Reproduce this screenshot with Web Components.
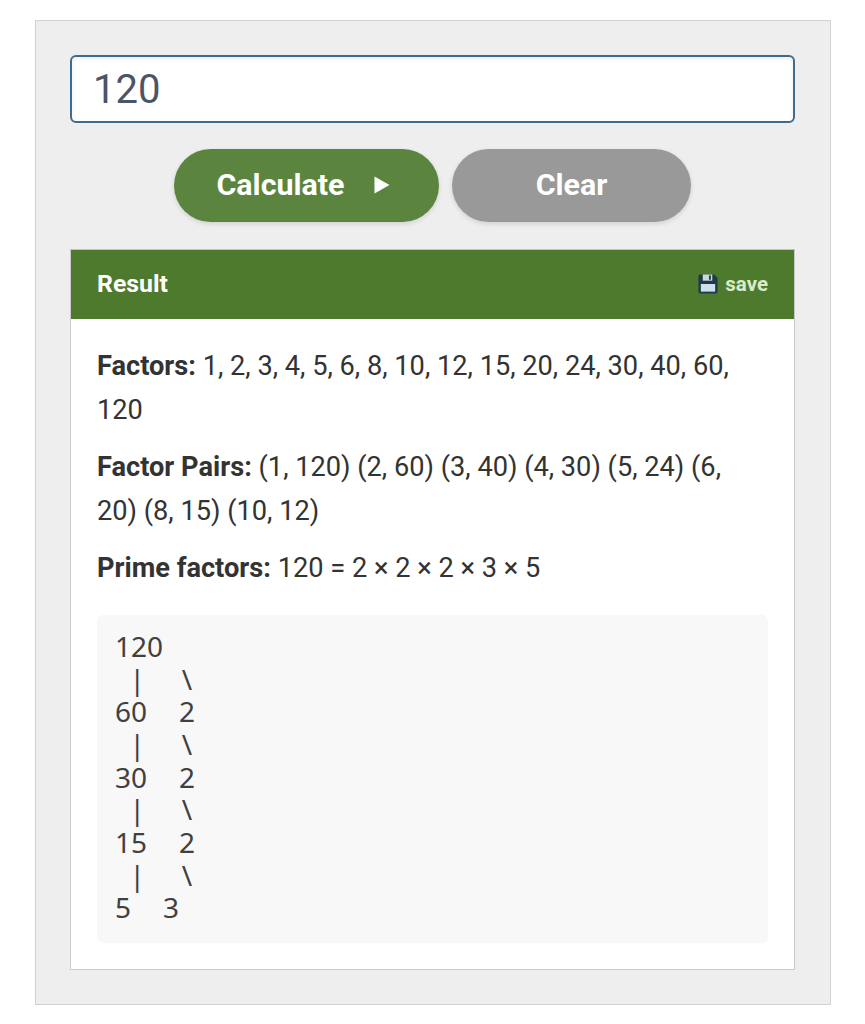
<!DOCTYPE html>
<html>
<head>
<meta charset="utf-8">
<title>Factor calculator</title>
<style>
  html, body { margin: 0; background: #fff; }
  body { padding: 20px 34px 19px 35px; font-family: Roboto, sans-serif; }
</style>
</head>
<body>
<factor-calc>
  <number-field value="120"></number-field>
  <button-row>
    <pill-button kind="go">Calculate</pill-button>
    <pill-button kind="clear">Clear</pill-button>
  </button-row>
  <result-panel>
    <p><b>Factors:</b> 1, 2, 3, 4, 5, 6, 8, 10, 12, 15, 20, 24, 30, 40, 60, 120</p>
    <p><b>Factor Pairs:</b> (1, 120) (2, 60) (3, 40) (4, 30) (5, 24) (6, 20) (8, 15) (10, 12)</p>
    <p><b>Prime factors:</b> 120 = 2 × 2 × 2 × 3 × 5</p>
    <factor-tree slot="tree">
      <div>120</div>
      <div class="link"> |  \</div>
      <div>60  2</div>
      <div class="link"> |  \</div>
      <div>30  2</div>
      <div class="link"> |  \</div>
      <div>15  2</div>
      <div class="link"> |  \</div>
      <div>5  3</div>
    </factor-tree>
  </result-panel>
</factor-calc>

<script>
class FactorCalc extends HTMLElement {
  constructor() {
    super();
    this.attachShadow({ mode: 'open' }).innerHTML = `
      <style>
        :host {
          display: block;
          box-sizing: border-box;
          height: 985px;
          padding: 34px 35px 34px 34px;
          background: #eee;
          border: 1px solid #d2d2d2;
        }
      </style>
      <slot></slot>`;
  }
}

class NumberField extends HTMLElement {
  constructor() {
    super();
    this.attachShadow({ mode: 'open' }).innerHTML = `
      <style>
        :host { display: block; }
        .box {
          box-sizing: border-box;
          height: 68px;
          padding: 0 21px;
          display: flex;
          align-items: center;
          background: #fff;
          border: 2px solid #3f6c8e;
          border-radius: 6px;
          box-shadow: inset 0 2px 4px rgba(0,0,0,0.07);
          color: #4a5568;
          font: 400 40px Roboto, sans-serif;
        }
      </style>
      <div class="box"></div>`;
  }
  connectedCallback() {
    this.shadowRoot.querySelector('.box').textContent = this.getAttribute('value');
  }
}

class ButtonRow extends HTMLElement {
  constructor() {
    super();
    this.attachShadow({ mode: 'open' }).innerHTML = `
      <style>
        :host {
          display: flex;
          justify-content: center;
          gap: 13px;
          margin: 26px 0 27px;
        }
      </style>
      <slot></slot>`;
  }
}

class PillButton extends HTMLElement {
  constructor() {
    super();
    this.attachShadow({ mode: 'open' }).innerHTML = `
      <style>
        :host {
          display: flex;
          box-sizing: border-box;
          height: 73px;
          padding-bottom: 2px;
          align-items: center;
          justify-content: center;
          gap: 29px;
          border-radius: 37px;
          color: #fff;
          font: 700 30.4px Roboto, sans-serif;
          box-shadow: 0 2px 5px rgba(0,0,0,0.12);
        }
        :host([kind="go"]) { width: 265px; padding-right: 7px; background: #5b853e; }
        :host([kind="clear"]) { width: 239px; background: #999; }
        svg { display: none; }
        :host([kind="go"]) svg { display: block; }
      </style>
      <span><slot></slot></span>
      <svg width="16" height="18" viewBox="0 0 16 18"><path d="M0.5 0.5 L15.5 9 L0.5 17.5 Z" fill="#fff"/></svg>`;
  }
}

class ResultPanel extends HTMLElement {
  constructor() {
    super();
    this.attachShadow({ mode: 'open' }).innerHTML = `
      <style>
        :host {
          display: block;
          box-sizing: border-box;
          height: 721px;
          background: #fff;
          border: 1px solid #c9c9c9;
          border-top-color: #b9c9ad;
          color: #333;
        }
        header {
          height: 69px;
          padding: 0 26px 2px;
          box-sizing: border-box;
          display: flex;
          align-items: center;
          justify-content: space-between;
          background: #4e7a2d;
          color: #fff;
          font: 700 24.8px Roboto, sans-serif;
        }
        .save {
          display: flex;
          align-items: center;
          gap: 7px;
          color: #d8eccb;
          font-size: 20.5px;
        }
        main { padding: 25px 30px 0 26px; font: 400 27.2px/44px Roboto, sans-serif; }
        ::slotted(p) { margin: 0 0 13px; }
        .tree { display: block; margin-top: 25px; }
        ::slotted(factor-tree) { margin: 0 26px; }
      </style>
      <header>
        <span>Result</span>
        <span class="save">
          <svg width="20" height="20" viewBox="0 0 21 21">
            <path d="M2 0.5 H17 L20.5 4 V19 a1.5 1.5 0 0 1 -1.5 1.5 H2 a1.5 1.5 0 0 1 -1.5 -1.5 V2 a1.5 1.5 0 0 1 1.5 -1.5 Z" fill="#1f3a4a"/>
            <rect x="5" y="0.5" width="10" height="6.5" fill="#cfd8dc"/>
            <rect x="11.5" y="1.5" width="2" height="4.5" fill="#1f3a4a"/>
            <rect x="3" y="10.5" width="15" height="8" fill="#cfe0ec"/>
          </svg>
          save
        </span>
      </header>
      <main><slot></slot></main>
      <div class="tree"><slot name="tree"></slot></div>`;
  }
}

class FactorTree extends HTMLElement {
  constructor() {
    super();
    this.attachShadow({ mode: 'open' }).innerHTML = `
      <style>
        :host {
          display: block;
          box-sizing: border-box;
          height: 328px;
          padding: 15px 18px;
          background: #f8f8f8;
          border-radius: 6px;
          color: #404040;
          font: 400 28px/32.65px "Noto Sans", sans-serif;
          word-spacing: 8.72px;
        }
        ::slotted(div) { white-space: pre; }
        ::slotted(div.link) { margin-left: -4px; word-spacing: 11.2px; }
      </style>
      <slot></slot>`;
  }
}

customElements.define('factor-calc', FactorCalc);
customElements.define('number-field', NumberField);
customElements.define('button-row', ButtonRow);
customElements.define('pill-button', PillButton);
customElements.define('result-panel', ResultPanel);
customElements.define('factor-tree', FactorTree);
</script>
</body>
</html>
